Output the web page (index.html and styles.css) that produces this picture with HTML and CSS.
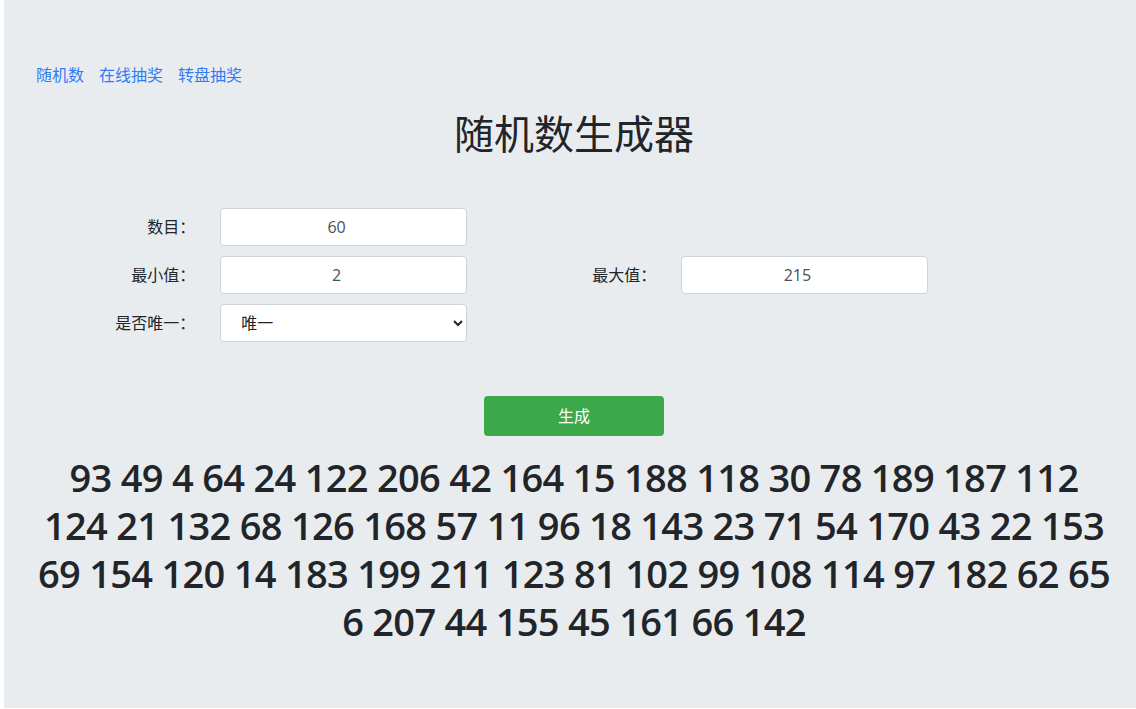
FILE: index.html
```html
<!DOCTYPE html>
<html lang="zh-CN">
  <head>
    <meta charset="UTF-8" />
    <meta name="viewport" content="width=device-width, initial-scale=1.0" />
    <title>随机数生成器</title>
    <link rel="stylesheet" href="styles.css">
  </head>
  <body>
    <div class="jumbotron">
      <nav class="top-nav">
        <a href="#">随机数</a>
        <a href="#">在线抽奖</a>
        <a href="#">转盘抽奖</a>
      </nav>

      <h2 class="title">随机数生成器</h2>

      <form class="gen-form" onsubmit="return false;">
        <label class="form-label" for="count">数目：</label>
        <div class="form-cell">
          <input id="count" class="form-input" type="text" value="60" />
        </div>
        <div class="form-empty"></div>

        <label class="form-label" for="min">最小值：</label>
        <div class="form-cell">
          <input id="min" class="form-input" type="text" value="2" />
        </div>
        <label class="form-label" for="max">最大值：</label>
        <div class="form-cell">
          <input id="max" class="form-input" type="text" value="215" />
        </div>
        <div></div>

        <label class="form-label" for="unique">是否唯一：</label>
        <div class="form-cell">
          <select id="unique" class="form-select">
            <option>唯一</option>
            <option>可重复</option>
          </select>
        </div>
        <div class="form-empty"></div>
      </form>

      <div class="actions">
        <button class="btn-generate" type="button">生成</button>
      </div>

      <h1 class="result">93 49 4 64 24 122 206 42 164 15 188 118 30 78 189 187 112 124 21 132 68 126 168 57 11 96 18 143 23 71 54 170 43 22 153 69 154 120 14 183 199 211 123 81 102 99 108 114 97 182 62 65 6 207 44 155 45 161 66 142</h1>
    </div>
  </body>
</html>
```

FILE: styles.css
```css
html,
body {
  margin: 0;
  padding: 0;
  overflow: hidden;
  background-color: #fff;
}

body {
  font-family: "Open Sans", "Noto Sans CJK SC", sans-serif;
  font-size: 16px;
  line-height: 1.5;
  color: #212529;
}

.jumbotron {
  margin-left: 4px;
  width: 1140px;
  box-sizing: border-box;
  padding: 62px 32px 63px;
  background-color: #e9ecef;
}

.top-nav {
  display: flex;
  gap: 15px;
  font-family: "Noto Sans CJK SC", sans-serif;
  line-height: 24px;
}

.top-nav a {
  color: #2f7cf6;
  text-decoration: none;
}

.title {
  margin: 22px 0 0;
  text-align: center;
  font-family: "Noto Sans CJK SC", sans-serif;
  font-size: 40px;
  font-weight: 400;
  line-height: 48px;
}

.gen-form {
  display: grid;
  grid-template-columns: 2fr 3fr 2fr 3fr 2fr;
  row-gap: 10px;
  margin: 52px -15px 0;
}

.gen-form > * {
  padding: 0 15px;
}

.form-empty {
  grid-column: span 3;
}

.gen-form > .form-label {
  display: flex;
  align-items: center;
  justify-content: flex-end;
  font-family: "Noto Sans CJK SC", sans-serif;
  padding: 0 10px 3px 15px;
}

.form-input,
.form-select {
  display: block;
  width: 100%;
  height: 38px;
  box-sizing: border-box;
  border: 1px solid #ced4da;
  border-radius: 4px;
  background-color: #fff;
  color: #495057;
  font-family: "Open Sans", "Noto Sans CJK SC", sans-serif;
  font-size: 16px;
}

.form-input {
  padding: 6px 26px 6px 12px;
  text-align: center;
}

.form-select {
  padding: 0 0 2px 16px;
  color: #212529;
  font-family: "Noto Sans CJK SC", sans-serif;
  font-size: 16px;
}

.actions {
  display: flex;
  justify-content: center;
  margin-top: 54px;
}

.btn-generate {
  width: 180px;
  height: 40px;
  padding: 0 0 3px;
  border: none;
  border-radius: 4px;
  background-color: #3ca84a;
  color: #fff;
  font-family: "Noto Sans CJK SC", sans-serif;
  font-size: 16px;
  cursor: pointer;
}

.result {
  margin: 17px 0 0;
  text-align: center;
  font-family: "Open Sans", sans-serif;
  font-size: 38px;
  font-weight: 600;
  letter-spacing: -0.7px;
  line-height: 48px;
  color: #212529;
}
```
